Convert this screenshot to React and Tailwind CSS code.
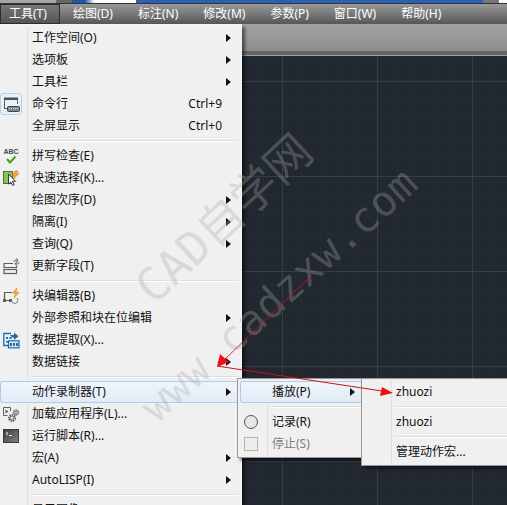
import React from 'react'
import clsx from 'clsx'

function CommandLineIcon() {
  return (
    <svg width="17" height="17" viewBox="0 0 17 17" fill="none">
      <path d="M1.500 13V2.500h13V8M1.500 12.500H4" stroke="#5a5f66" />
      <path d="M1 1.500h14v2.500H1z" fill="#4b5058" />
      <rect x="4.500" y="10.500" width="12" height="5" rx="1" fill="#7e848c" stroke="#3f444b" />
      <path d="M6 12.500h9" stroke="#e3e5e8" strokeDasharray="1 1" />
    </svg>
  )
}

function SpellIcon() {
  return (
    <svg width="18" height="17" viewBox="0 0 18 17" fill="none">
      <text x="9" y="6" textAnchor="middle" fontSize="7" fontWeight="700" fontFamily="Liberation Sans, sans-serif" fill="#4a4a4a">ABC</text>
      <path d="M5 11l3 3.500 5.500-6" stroke="#4c9a2a" strokeWidth="2" />
    </svg>
  )
}

function QuickSelectIcon() {
  return (
    <svg width="17" height="17" viewBox="0 0 17 17" fill="none">
      <rect x=".5" y="1.500" width="9" height="12" fill="#8cc063" stroke="#3f7a26" />
      <path d="M12 1l-3 4 2 .5-1 4 6-6-2.500-.5L15 1z" fill="#f2a93b" stroke="#c97e1a" strokeWidth=".6" />
      <path d="M5.500 4v10l2.300-2 1.700 3.500 1.700-.8-1.700-3.400h3z" fill="#fff" stroke="#333" />
    </svg>
  )
}

function FieldIcon() {
  return (
    <svg width="17" height="17" viewBox="0 0 17 17" fill="none">
      <path d="M10 5.500H1v4h12.500V8" stroke="#5c5c5c" strokeWidth="1.200" />
      <rect x="1" y="11.500" width="12.500" height="4" stroke="#5c5c5c" strokeWidth="1.200" />
      <path d="M11 4c0-2 2-2.500 3.500-1.500M13.500.5l1.500 2-2 1M16 4c0 2-2 2.500-3.500 1.500M13.500 7.500l-1.500-2 2-1" stroke="#4d6b3d" />
    </svg>
  )
}

function BlockEditIcon() {
  return (
    <svg width="17" height="17" viewBox="0 0 17 17" fill="none">
      <path d="M9 4.500H1.500v8H8" stroke="#5c5c5c" strokeWidth="1.200" />
      <path d="M0 11h3v3H0zM6 11h3v3H6z" fill="#5c5c5c" />
      <path d="M8.500 12a3.200 3.200 0 1 0 5.500-2" stroke="#777" />
      <path d="M14 0l-4.500 5 3 .8L11 10l5-5.500-3-.6z" fill="#f5a623" stroke="#cf8412" strokeWidth=".5" />
    </svg>
  )
}

function ExtractIcon() {
  return (
    <svg width="17" height="17" viewBox="0 0 17 17" fill="none">
      <path d="M8 1.500H.8v12H5" stroke="#1f6cab" strokeWidth="1.300" />
      <path d="M3 5h2v2H3zM6.500 5h2v2h-2zM3 9h2v1.500H3z" fill="#1f6cab" />
      <path d="M7 3h4V.5l4.500 3.700L11 8V5.500H9" fill="#1f6cab" />
      <rect x="5.500" y="8.800" width="10.500" height="7" fill="#dcebf7" stroke="#1f6cab" strokeWidth="1.200" />
      <path d="M7 11h2v3H7zM10 11h2v3h-2zM13 11h2v3h-2z" fill="#1f6cab" />
    </svg>
  )
}

function LoadAppIcon() {
  return (
    <svg width="17" height="17" viewBox="0 0 17 17" fill="none">
      <path d="M4.500 9.500h-4v-8h7V5" stroke="#5c5c5c" />
      <path d="M2.500 3.500v4l3-2z" fill="#5c5c5c" />
      <circle cx="9" cy="12" r="3.200" stroke="#5c5c5c" strokeWidth="1.600" strokeDasharray="1.500 .9" />
      <circle cx="9" cy="12" r="2" stroke="#5c5c5c" />
      <circle cx="13" cy="6.500" r="2.500" stroke="#5c5c5c" strokeWidth="1.500" strokeDasharray="1.400 .8" />
      <circle cx="13" cy="6.500" r="1.300" stroke="#5c5c5c" strokeWidth=".8" />
    </svg>
  )
}

function ScriptIcon() {
  return (
    <svg width="17" height="17" viewBox="0 0 17 17" fill="none">
      <defs>
        <linearGradient id="script" x1="0" y1="0" x2="1" y2="1">
          <stop offset="0" stopColor="#3c3c3c" />
          <stop offset="1" stopColor="#808080" />
        </linearGradient>
      </defs>
      <rect x=".5" y="1.500" width="15" height="13" fill="url(#script)" stroke="#3a3a3a" />
      <path d="M3 4l2 1.500L3 7M6 7.500h3" stroke="#eee" />
    </svg>
  )
}

function RecordIcon() {
  return (
    <svg width="16" height="16" viewBox="0 0 16 16">
      <circle cx="8" cy="8" r="6.500" fill="#e6e6e6" stroke="#505050" />
    </svg>
  )
}

function StopIcon() {
  return (
    <svg width="16" height="16" viewBox="0 0 16 16">
      <rect x="1.500" y="1.500" width="13" height="13" fill="#ececec" stroke="#b4b4b4" />
    </svg>
  )
}

const SEP = null

const macroItems = [
  { label: 'zhuozi' },
  SEP,
  { label: 'zhuozi' },
  SEP,
  { label: '管理动作宏...' },
]

const recorderItems = [
  { label: '播放(P)', arrow: true, open: true, items: macroItems, width: 'w-[168px]' },
  SEP,
  { label: '记录(R)', icon: <RecordIcon /> },
  { label: '停止(S)', icon: <StopIcon />, disabled: true },
]

const toolItems = [
  { label: '工作空间(O)', arrow: true },
  { label: '选项板', arrow: true },
  { label: '工具栏', arrow: true },
  { label: '命令行', icon: <CommandLineIcon />, checked: true, shortcut: 'Ctrl+9' },
  { label: '全屏显示', shortcut: 'Ctrl+0' },
  SEP,
  { label: '拼写检查(E)', icon: <SpellIcon /> },
  { label: '快速选择(K)...', icon: <QuickSelectIcon /> },
  { label: '绘图次序(D)', arrow: true },
  { label: '隔离(I)', arrow: true },
  { label: '查询(Q)', arrow: true },
  { label: '更新字段(T)', icon: <FieldIcon /> },
  SEP,
  { label: '块编辑器(B)', icon: <BlockEditIcon /> },
  { label: '外部参照和块在位编辑', arrow: true },
  { label: '数据提取(X)...', icon: <ExtractIcon /> },
  { label: '数据链接', arrow: true },
  SEP,
  { label: '动作录制器(T)', arrow: true, open: true, items: recorderItems, width: 'w-[129px]' },
  { label: '加载应用程序(L)...', icon: <LoadAppIcon /> },
  { label: '运行脚本(R)...', icon: <ScriptIcon /> },
  { label: '宏(A)', arrow: true },
  { label: 'AutoLISP(I)', arrow: true },
  SEP,
  { label: '显示图像(Y)', arrow: true },
]

const menus = ['工具(T)', '绘图(D)', '标注(N)', '修改(M)', '参数(P)', '窗口(W)', '帮助(H)']

function Separator() {
  return (
    <li role="separator" className="flex h-2 items-center">
      <span className="h-full w-7 border-r border-[#dfe0e0]" />
      <span className="ml-0.5 h-0.5 flex-1 border-t border-[#dfdfdf] bg-white" />
    </li>
  )
}

function MenuItem({ item }) {
  return (
    <li className="relative">
      <button
        disabled={item.disabled}
        className={clsx(
          'relative flex h-[22px] w-full items-center text-left whitespace-nowrap',
          item.disabled ? 'text-[#7d7d7d]' : 'text-[#111]',
          item.open && 'rounded-[3px] bg-linear-to-b from-[#f1f5fa] to-[#dfebf7] ring-1 ring-inset ring-[#aecbe8]',
        )}
      >
        <span className={clsx('flex h-full w-7 items-center border-r', item.open ? 'border-transparent' : 'border-[#dfe0e0]')}>
          <span
            className={clsx(
              'flex size-[22px] items-center justify-center',
              item.checked && 'rounded-[3px] border border-[#b5d0ee] bg-[#e9f0f8]',
            )}
          >
            {item.icon}
          </span>
        </span>
        <span className="ml-1 flex-1">{item.label}</span>
        {item.shortcut && <span className="mr-[17px]">{item.shortcut}</span>}
        {item.arrow && (
          <svg className="mr-2" width="5" height="8" viewBox="0 0 5 8">
            <path d="M0 0l5 4-5 4z" fill="#111" />
          </svg>
        )}
      </button>
      {item.items && (
        <Menu items={item.items} className={clsx('-top-[3px] left-full -ml-0.5 border-[#979797]', item.width)} />
      )}
    </li>
  )
}

function Menu({ items, className }) {
  return (
    <ul className={clsx('absolute z-10 border bg-[#f0f0f0] p-0.5 text-xs shadow-[3px_3px_3px_rgba(0,0,0,0.5)]', className)}>
      {items.map((item, i) => (item ? <MenuItem key={i} item={item} /> : <Separator key={i} />))}
    </ul>
  )
}

function MenuBar() {
  return (
    <nav className="relative z-10 flex h-5 gap-px bg-linear-to-b from-[#999] to-[#575757] text-xs text-white">
      {menus.map((label, i) => (
        <div key={label} className={clsx(i === 0 && 'w-[60px]')}>
          <button
            className={clsx(
              'h-full whitespace-nowrap',
              i === 0 ? 'w-full border border-[#2d2d2d] bg-linear-to-b from-[#777] to-[#555] pl-2 text-left' : 'px-3',
            )}
          >
            {label}
          </button>
          {i === 0 && <Menu items={toolItems} className="top-full -left-[3px] w-[245px] border-[#f6f6f6]" />}
        </div>
      ))}
    </nav>
  )
}

function DrawingGrid() {
  return (
    <svg className="min-h-0 w-full flex-1 bg-[#212830]">
      <defs>
        <pattern id="minor" width="19" height="19" patternUnits="userSpaceOnUse" x="16" y="6">
          <path d="M.5 0v19M0 .5h19" stroke="#252c34" />
        </pattern>
        <pattern id="major" width="95" height="95" patternUnits="userSpaceOnUse" x="92" y="25">
          <path d="M.5 0v95M0 .5h95" stroke="#363d45" />
        </pattern>
      </defs>
      <rect width="100%" height="100%" fill="url(#minor)" />
      <rect width="100%" height="100%" fill="url(#major)" />
    </svg>
  )
}

function Annotations() {
  return (
    <svg className="pointer-events-none absolute top-0 left-0 z-20 h-full w-full">
      <g
        fill="#a8a8a8"
        fillOpacity=".33"
        fontFamily="'DejaVu Sans Mono', 'Noto Sans CJK SC', monospace"
      >
        <text fontSize="46" transform="translate(154 306) rotate(-43)">CAD自学网</text>
        <text fontSize="42" transform="translate(157 424) rotate(-42)">www.cadzxw.com</text>
      </g>
      <g stroke="#c8141c" strokeWidth="1">
        <path d="M313 274L222 362" strokeOpacity=".85" />
        <path d="M217 366L382 391" />
      </g>
      <path d="M217 367l3-13 9 8zM393 393l-13 3 2-9z" fill="#ee1111" />
    </svg>
  )
}

export default function App() {
  return (
    <div className="relative flex h-screen flex-col overflow-hidden font-['Noto_Sans','Noto_Sans_CJK_SC',sans-serif]">
      {/* bottom edge of the window title strip */}
      <div className="flex h-1 border-b border-[#333]">
        <div className="w-14 bg-[#a5a5a5]" />
        <div className="w-4 bg-[#666]" />
        <div className="w-16 bg-linear-to-r from-[#1d56a8] from-20% via-white via-35% to-white" />
        <div className="flex-1 bg-[#2a62b0]" />
        <div className="w-4 bg-[#777]" />
        <div className="w-2 bg-white" />
      </div>
      <MenuBar />
      <div className="h-[27px] bg-linear-to-b from-[#a3a3a3] to-[#8e8e8e]" />
      <div className="h-[5px] border-b border-[#a0a09c] bg-[#666661]" />
      <DrawingGrid />
      <Annotations />
    </div>
  )
}
